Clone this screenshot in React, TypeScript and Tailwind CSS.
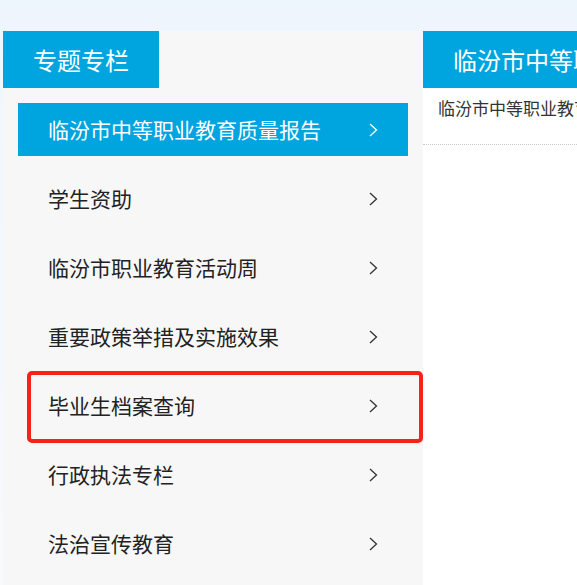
const items = [
  '临汾市中等职业教育质量报告',
  '学生资助',
  '临汾市职业教育活动周',
  '重要政策举措及实施效果',
  '毕业生档案查询',
  '行政执法专栏',
  '法治宣传教育',
]

function Chevron({ white }: { white?: boolean }) {
  return (
    <svg width="10" height="16" viewBox="0 0 10 16" className={white ? 'shrink-0 text-white' : 'shrink-0 text-[#333]'}>
      <polyline points="2,2 8.5,8 2,14" fill="none" stroke="currentColor" strokeWidth="1.3" />
    </svg>
  )
}

export default function App() {
  return (
    <div
      className="relative w-[577px] h-[585px] overflow-hidden bg-gradient-to-b from-[#eef6fd] to-[#f7fafd]"
      style={{ fontFamily: '"Noto Sans CJK SC", "Noto Sans", sans-serif' }}
    >
      {/* 面包屑，只露出底部 */}
      <div className="h-[31px] overflow-hidden">
        <div className="-mt-[19px] pl-[8px] text-[16px] leading-[20px] text-[#aaa] whitespace-nowrap">
          当前位置：首页 ＞ 专题专栏 ＞ 临汾市中等职业教育质量报告
        </div>
      </div>

      <div className="flex h-[554px]">
        {/* 左侧栏 */}
        <div className="ml-[3px] w-[420px] shrink-0 bg-[#f7f7f7]">
          <div className="h-[57px] w-[156px] bg-[#00a5e0] flex items-center justify-center text-white text-[24px]">
            专题专栏
          </div>
          <ul className="pt-[15px] px-[15px]">
            {items.map((t, i) => (
              <li
                key={t}
                className={
                  i === 0
                    ? 'h-[53px] mb-[16px] flex items-center justify-between pl-[30px] pr-[30px] bg-[#00a5e0] text-white text-[21px] whitespace-nowrap'
                    : 'h-[53px] mb-[16px] flex items-center justify-between pl-[30px] pr-[30px] text-[#222] text-[21px] whitespace-nowrap'
                }
              >
                <span>{t}</span>
                <Chevron white={i === 0} />
              </li>
            ))}
          </ul>
        </div>

        {/* 右侧内容 */}
        <div className="flex-1 min-w-0 bg-white">
          <div className="h-[57px] bg-[#00a5e0] flex items-center pl-[30px] text-white text-[24px] whitespace-nowrap overflow-hidden">
            临汾市中等职业教育质量报告
          </div>
          <div className="h-[57px] pt-[7px] pl-[15px] text-[17px] text-[#333] whitespace-nowrap overflow-hidden border-b border-dotted border-[#ccc]">
            临汾市中等职业教育质量报告
          </div>
        </div>
      </div>

      {/* 红框标注 */}
      <div className="absolute left-[27px] top-[371px] w-[396px] h-[72px] border-4 border-[#f5231b] rounded-[5px]" />
    </div>
  )
}
